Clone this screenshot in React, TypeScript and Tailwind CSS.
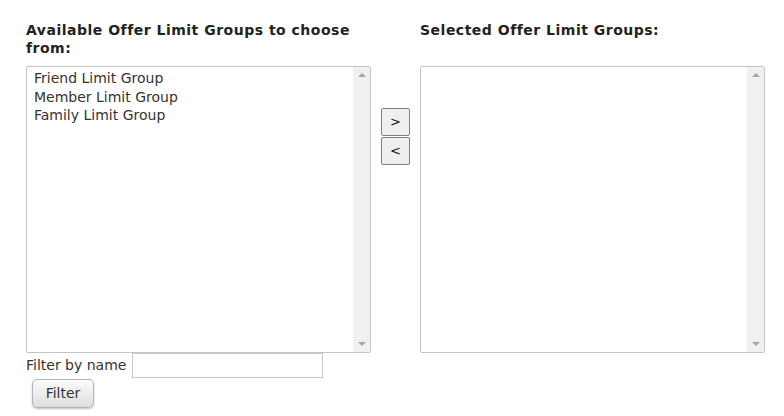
const font = { fontFamily: '"DejaVu Sans", Verdana, sans-serif' };

function ScrollTrack() {
  return (
    <div className="flex w-[17px] shrink-0 flex-col items-center justify-between bg-[#f0f0f0] py-[6px]">
      <span className="h-0 w-0 border-x-[4px] border-b-[4px] border-x-transparent border-b-[#a3a8a8]" />
      <span className="h-0 w-0 border-x-[4px] border-t-[4px] border-x-transparent border-t-[#a3a8a8]" />
    </div>
  );
}

function ListBox({ items }: { items: string[] }) {
  return (
    <div className="flex h-[287px] w-[345px] rounded-[2px] border border-[#c4c4c4] bg-white">
      <ul className="flex-1 pl-[7px] pt-[2px] text-[14px] leading-[18.5px] text-[#333]">
        {items.map((item) => (
          <li key={item}>{item}</li>
        ))}
      </ul>
      <ScrollTrack />
    </div>
  );
}

function MoveButton({ label }: { label: string }) {
  return (
    <button
      type="button"
      className="flex h-[28px] w-[29px] items-center justify-center rounded-[2px] border border-[#8a7f6e] bg-[#efefef] text-[13px] text-[#111]"
    >
      {label}
    </button>
  );
}

export default function App() {
  const available = ["Friend Limit Group", "Member Limit Group", "Family Limit Group"];

  return (
    <div className="h-[416px] w-[784px] bg-white pl-[26px] pt-[21px] text-[#222]" style={font}>
      <div className="flex items-start">
        <div className="flex w-[345px] flex-col">
          <h3 className="h-[45px] text-[14px] font-bold leading-[18px] tracking-[0.5px]">
            Available Offer Limit Groups to choose from:
          </h3>
          <ListBox items={available} />
          <div className="flex items-center gap-[6px]">
            <label className="text-[14px] text-[#333]">Filter by name</label>
            <input className="h-[25px] w-[191px] border border-[#c8c8c8] bg-white px-1 text-[13px] outline-none" />
          </div>
          <div className="pl-[6px] pt-[1px]">
            <button
              type="button"
              className="h-[29px] w-[62px] rounded-[5px] border border-[#b5b5b5] bg-gradient-to-b from-[#fbfbfb] to-[#dedede] text-[14px] text-[#333] shadow-[0_1px_2px_rgba(0,0,0,0.25)]"
            >
              Filter
            </button>
          </div>
        </div>

        <div className="ml-[10px] mt-[87px] flex w-[29px] flex-col gap-[1px]">
          <MoveButton label=">" />
          <MoveButton label="<" />
        </div>

        <div className="ml-[10px] flex w-[345px] flex-col">
          <h3 className="h-[45px] text-[14px] font-bold leading-[18px] tracking-[0.5px]">
            Selected Offer Limit Groups:
          </h3>
          <ListBox items={[]} />
        </div>
      </div>
    </div>
  );
}
